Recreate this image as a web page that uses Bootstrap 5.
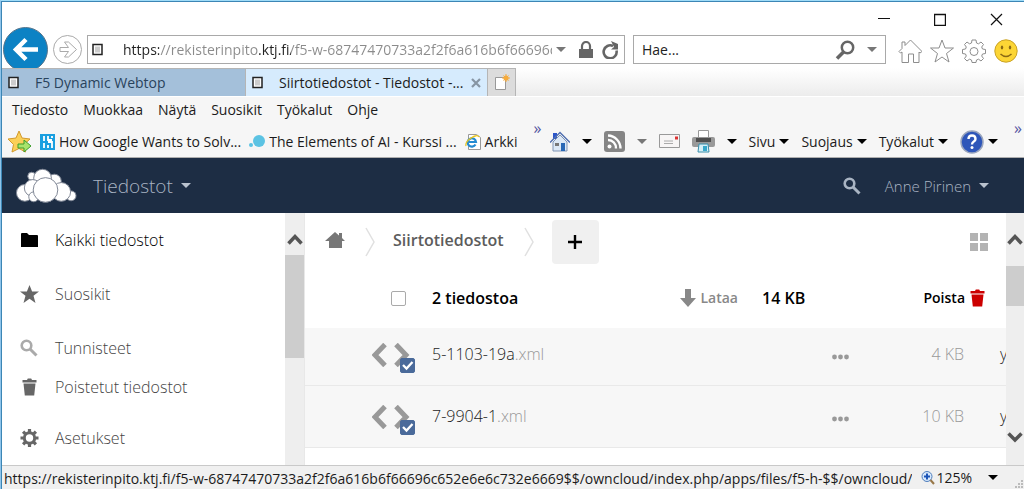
<!DOCTYPE html>
<html lang="fi">
<head>
<meta charset="utf-8">
<meta name="viewport" content="width=device-width, initial-scale=1">
<title>Siirtotiedostot - Tiedostot</title>
<link href="https://cdn.jsdelivr.net/npm/bootstrap@5.3.0/dist/css/bootstrap.min.css" rel="stylesheet">
<style>
body{font:14px/20px "Open Sans","Noto Sans",sans-serif;color:#1b1b1b;background:#fff;border-top:1px solid #9fdcf8;border-left:1px solid #8fc4ea;overflow:hidden}
.window{border-top:1px solid #3c86b5;border-left:1px solid #3c86b5;min-height:0}
svg{display:block;flex:none}
button{border:0;background:none;padding:0;color:inherit;font:inherit;white-space:nowrap}
a{color:inherit;text-decoration:none;white-space:nowrap}
.caption-bar{height:25px;padding-right:8px}
.caption-bar button{width:56px;padding-top:8px;display:flex;justify-content:center}
.caption-bar button:last-child{width:40px;margin-left:8px}
.address-row{height:41px;padding-right:6px}
.box{height:29px;border:1px solid #a9a9a9;background:#fff;display:flex;align-items:center}
.box input{border:0;outline:0;padding:0;font:inherit;min-width:0;flex:1;background:none;color:#222}
.box input::placeholder{color:#222;opacity:1}
.search-box{width:253px}
.address-box input.address{background:linear-gradient(90deg,#222 36px,#8b8b8b 36px 136px,#222 136px 168px,#8b8b8b 168px);-webkit-background-clip:text;background-clip:text;-webkit-text-fill-color:transparent}
.tabs{height:28px;background:linear-gradient(#fff,#ececec)}
.tab-item{display:flex;align-items:center;padding:0 6px;border-top:1px solid #b5b5b5;border-right:1px solid #b5b5b5}
.tab-item.one{width:244px;background:#a4c0da;color:#29435c}
.tab-item.two{width:242px;background:#d6ebfd}
.tab-item.add{width:28px;background:#dcdcdc}
.menus{background:#f6f6f6;border-top:1px solid #fff;height:30px;padding:0 10px 4px;gap:15px}
.commands{background:#f6f6f6;height:32px;border-bottom:1px solid #aeaeae;padding:0 2px 0 6px}
.tools{gap:12px}
.caret{width:0;height:0;border:5px solid transparent;border-top-color:#000;border-bottom:0;flex:none}
.caret.soft{border-top-color:#777}
.chev{color:#5454a0;align-self:flex-start;line-height:4px;font-size:16px;white-space:nowrap}
.cloudbar{background:#1d2d44;height:55px;color:#a9b4c3;padding:0 35px 0 13px;font-weight:300}
.cloudbar .app{font-size:19px}
.cloudbar .user{font-size:15px}
.cloudbar .caret{border-top-color:#b9c2ce}
.work{min-height:0}
.side{width:283px;font-size:16px;font-weight:300;color:#444;padding-top:2px}
.side a{display:flex;align-items:center;padding-left:18px;gap:16px;padding-top:12px;box-sizing:content-box;height:42px}
.side a.near{height:36px;padding-top:0}
.side a.first{padding-top:4px}
.bar{background:#eee;width:19px;display:flex;flex-direction:column;align-items:center;flex:none}
.bar.page{width:18px}
.bar .thumb{background:#cdcdcd;width:100%}
.bar .up{height:42px;padding-top:20px}
.bar.page .up{height:53px}
.main{border-left:1px solid #e8e8e8;min-width:0}
.crumbs{height:57px;padding-left:20px;padding-right:18px;color:#5c5c5c;font-size:16px;font-weight:600}
.crumbs .here{padding-bottom:4px}
.plus{width:47px;height:44px;background:#f0f0f0;border-radius:4px;display:flex;align-items:center;justify-content:center}
.files{table-layout:fixed;width:100%;font-size:16px;font-weight:300;border-collapse:collapse}
.files th,.files td{padding:0;vertical-align:bottom;line-height:20px;height:62px;padding-bottom:21px;overflow:hidden;white-space:nowrap}
.files th{height:58px;padding-bottom:20px;font-weight:600;color:#000}
.files th.pick{padding-right:26px;padding-bottom:22px}
.files tbody tr{background:#f7f7f7;border-bottom:1px solid #e9e9e9}
.files tbody tr:first-child td{height:57px}
.files td.pick{padding:0 0 12px 67px}
.files td.when{padding-left:36px}
.files .ext,.files .size{color:#999}
.pickbox{width:43px;height:30px;position:relative}
.pickbox input{position:absolute;right:0;bottom:0}
input.tick{appearance:none;width:15px;height:15px;margin:0;border:1px solid #aaa;border-radius:2px;background:#fff;display:block}
input.tick:checked{border-color:#4a6a9a;background:#4a6a9a url("data:image/svg+xml,%3Csvg xmlns='http://www.w3.org/2000/svg' viewBox='0 0 13 13'%3E%3Cpath d='M2 6l3.500 3.500L11.500 3' fill='none' stroke='white' stroke-width='2.300'/%3E%3C/svg%3E") center/contain}
.lighter{font-size:14px;font-weight:600}
.lighter.soft{color:#888}
.statusbar{background:#f0f0f0;border-top:1px solid #c9c9c9;height:24px}
.statusbar .link{overflow:hidden;white-space:nowrap;min-width:0;flex:1;padding-left:2px;padding-top:3px}
</style>
</head>
<body class="vh-100 d-flex flex-column">
<svg width="0" height="0" class="position-absolute"><defs>
<symbol id="doc" viewBox="0 0 11 12"><path d="M1 1h9v10H1z" fill="#fff" stroke="#222" stroke-width="1.500"/><path d="M3 3h5v6H3z" fill="#ccc"/></symbol>
<symbol id="bin" viewBox="0 0 16 18"><path d="M1 2h4.500l.8-1.500h3.400L10.500 2H15v2.500H1zM2 5.500h12L12.700 17.500H3.300z"/></symbol>
<symbol id="lens" viewBox="0 0 18 18"><circle cx="6.500" cy="6.500" r="4.800" fill="none" stroke="currentColor" stroke-width="2.600"/><path d="M10 10l6.500 6.500" stroke="currentColor" stroke-width="3"/></symbol>
<symbol id="code" viewBox="0 0 38 24"><path d="M13 1.500L3 12l10 10.500M24 1.500L34 12 24 22.500" fill="none" stroke="#999" stroke-width="5"/></symbol>
<symbol id="dots" viewBox="0 0 17 5"><g fill="#999"><circle cx="2.500" cy="2.500" r="2.400"/><circle cx="8.500" cy="2.500" r="2.400"/><circle cx="14.500" cy="2.500" r="2.400"/></g></symbol>
<symbol id="uparrow" viewBox="0 0 16 12"><path d="M1.500 10.500L8 3.500l6.500 7" fill="none" stroke="#555" stroke-width="3.500"/></symbol>
</defs></svg>

<div class="window flex-fill d-flex flex-column">
  <div class="caption-bar d-flex justify-content-end">
    <button aria-label="Pienennä"><svg width="12" height="14"><path d="M0 8.500h12" stroke="#111"/></svg></button>
    <button aria-label="Suurenna"><svg width="12" height="16"><path d="M.5 4.500h11v11H.5z" fill="none" stroke="#111" stroke-width="1.400"/></svg></button>
    <button aria-label="Sulje"><svg width="13" height="16"><path d="M1 4l11 11M12 4L1 15" stroke="#111" stroke-width="1.200"/></svg></button>
  </div>

  <div class="address-row d-flex">
    <button aria-label="Takaisin"><svg width="47" height="41"><circle cx="23.500" cy="22.500" r="22" fill="#0c82c4" stroke="#57758c"/><path d="M36 22.500H15M24 12.500l-10 10 10 10" fill="none" stroke="#fff" stroke-width="4.500"/></svg></button>
    <button class="ms-1" aria-label="Eteenpäin"><svg width="30" height="41"><circle cx="14.500" cy="22.500" r="14" fill="#fff" stroke="#aaa"/><path d="M7 20.500h8.500l-4-5.500h4l8 7.500-8 7.500h-4l4-5.500H7z" fill="none" stroke="#aaa"/></svg></button>
    <div class="box address-box flex-fill mt-2 ms-1 px-1"><svg class="me-3" width="11" height="13"><use href="#doc"/></svg>
      <input class="address ms-1" aria-label="Osoite" value="https://rekisterinpito.ktj.fi/f5-w-68747470733a2f2f6a616b6f66696c">
      <span class="caret soft ms-1 me-2"></span>
      <svg class="ms-1" width="16" height="18"><path d="M1 8h14v9H1z" fill="#666"/><path d="M4 9V5a4 4 0 0 1 8 0v4" fill="none" stroke="#666" stroke-width="2.200"/></svg>
      <button class="ms-2" aria-label="Päivitä"><svg width="18" height="18"><path d="M14.500 8.500A6.500 6.500 0 1 1 11 4" transform="translate(0 1)" fill="none" stroke="#666" stroke-width="2.600"/><path d="M9 0l7 3v5.500H9l3-2.500z" fill="#666"/></svg></button>
    </div>
    <div class="box search-box mt-2 ms-2 ps-2"><input aria-label="Haku" placeholder="Hae..."><button class="me-2" aria-label="Hae"><svg width="20" height="20"><circle cx="12.500" cy="7.500" r="5.700" fill="none" stroke="#666" stroke-width="2.500"/><path d="M8.500 12L2 18.500" stroke="#666" stroke-width="3.500"/></svg></button><span class="caret soft ms-1 me-2"></span></div>
    <div class="d-flex gap-2 mt-2 ms-2 align-items-start pt-1 ps-1">
      <button aria-label="Koti"><svg width="24" height="24" fill="none" stroke="#8d8d8d"><path d="M1 12.500L4 9.500V3h3v3.500L12.500 1 24 12.500l-2 1.500-1-1v10.500h-5.500V15h-5v8.500H4V13l-1.500 1z"/></svg></button>
      <button aria-label="Suosikit"><svg width="24" height="24" fill="none" stroke="#8d8d8d"><path d="M12 1l3 8h8.500l-7 5.500 2.500 8.500-7-5-7 5 2.500-8.500-7-5.500H9z"/></svg></button>
      <button aria-label="Työkalut"><svg width="24" height="24" fill="none" stroke="#8d8d8d"><path d="M10 1h4l.5 3 2 .8L19 3l2.500 2.500-1.800 2.500.8 2 3 .5v4l-3 .5-.8 2 1.800 2.500L19 22l-2.500-1.800-2 .8-.5 2.500h-4L9.500 21l-2-.8L5 22l-2.500-2.500 1.800-2.500-.8-2-3-.5v-4l3-.5.8-2L2.500 5.500 5 3l2.500 1.800 2-.8z"/><circle cx="12" cy="12.500" r="4"/></svg></button>
      <button aria-label="Palaute"><svg width="24" height="24"><circle cx="12" cy="12" r="11.200" fill="#fcd535" stroke="#c9a227"/><ellipse cx="8" cy="8.500" rx="1.200" ry="2" fill="#8a6914"/><ellipse cx="16" cy="8.500" rx="1.200" ry="2" fill="#8a6914"/><path d="M6.500 15q5.500 5 11 0" fill="none" stroke="#8a6914" stroke-width="1.500"/></svg></button>
    </div>
  </div>

  <div class="tabs d-flex">
    <a href="#" class="tab-item one"><svg class="me-3" width="11" height="13"><use href="#doc"/></svg>F5 Dynamic Webtop</a>
    <div class="tab-item two"><svg width="11" height="13"><use href="#doc"/></svg><a href="#" class="ms-3">Siirtotiedostot - Tiedostot -...</a><button class="ms-auto" aria-label="Sulje välilehti"><svg width="10" height="10"><path d="M1 1l8 8M9 1L1 9" stroke="#8795a3" stroke-width="2.200"/></svg></button></div>
    <button class="tab-item add" aria-label="Uusi välilehti"><svg width="16" height="17"><path d="M1.500 3.500h10v12h-10z" fill="#fff" stroke="#999"/><circle cx="12" cy="4" r="2.600" fill="#f6ab3c"/><path d="M12 0v8M8 4h8M9.500 1.500l5 5M14.500 1.500l-5 5" stroke="#f6ab3c"/></svg></button>
  </div>

  <nav class="menus d-flex align-items-center"><a href="#">Tiedosto</a><a href="#">Muokkaa</a><a href="#">Näytä</a><a href="#">Suosikit</a><a href="#">Työkalut</a><a href="#">Ohje</a></nav>

  <div class="commands d-flex align-items-center">
    <button aria-label="Lisää suosikkeihin"><svg width="24" height="24"><path d="M11 1l3 7 8 1-6 5.500L17.500 22 11 18.500 4 22l1.500-7.500L0 9l8-1z" fill="#fbd058" stroke="#d39a2d"/><path d="M10 14h6v-4l7 6-7 6v-4h-6z" fill="#a9e36b" stroke="#3d9d2b"/></svg></button>
    <a href="#" class="d-flex align-items-center ms-2"><svg class="me-1" width="15" height="16"><path d="M0 0h15v16H0z" fill="#1a9fe0"/><path d="M4 2v5M4 9v5M8 2v4h4M12 2v2M8 8h4v6M8 11v3" stroke="#fff" stroke-width="1.800" fill="none"/></svg>How Google Wants to Solv...</a>
    <a href="#" class="d-flex align-items-center ms-2"><svg class="me-1" width="16" height="16"><circle cx="10" cy="7" r="6" fill="#5cc3e3"/><circle cx="2" cy="11" r="2" fill="#5cc3e3"/></svg>The Elements of AI - Kurssi ...</a>
    <a href="#" class="d-flex align-items-center ms-2"><svg class="me-1" width="16" height="16"><path d="M3.500.5h8l4 3v12h-12z" fill="#fff" stroke="#999"/><path d="M10.500 10.500A4.200 4.200 0 1 1 11 8H4" fill="none" stroke="#238bd2" stroke-width="2.200"/><path d="M1 12Q0 8 6 4t8-1" fill="none" stroke="#e9c51f" stroke-width="1.300"/></svg>Arkki</a>
    <span class="chev ms-3">»</span>
    <div class="tools d-flex align-items-center ms-auto flex-shrink-0">
      <button aria-label="Kotisivu"><svg width="20" height="21"><path d="M3 2h4v6H3z" fill="#2b55c9"/><path d="M3 11l7-7 7 7v9H3z" fill="#dbe8f6" stroke="#8095b5"/><path d="M0 11.500L10 1.500l10 10" fill="none" stroke="#506fb0" stroke-width="1.500"/><path d="M11 12h4v8h-4z" fill="#2867b5"/><path d="M5 12h4v3H5z" fill="#777"/></svg></button><span class="caret"></span>
      <button aria-label="Syötteet"><svg width="21" height="21"><rect width="21" height="21" rx="3" fill="#858585"/><circle cx="5.500" cy="15.500" r="2" fill="#fff"/><path d="M4 9a8 8 0 0 1 8 8.500M4 4.500A13 13 0 0 1 16.500 17.500" fill="none" stroke="#fff" stroke-width="2.400"/></svg></button><span class="caret soft"></span>
      <button aria-label="Lue sähköposti"><svg width="21" height="15"><path d="M.5.500h20v13H.500z" fill="#f7f5f5" stroke="#999"/><path d="M16 2.500h3v3h-3z" fill="#d33"/><path d="M5 7h9M5 9.500h9" stroke="#aaa"/></svg></button>
      <button aria-label="Tulosta"><svg width="23" height="23"><path d="M6.500.5h10v8h-10z" fill="#fff" stroke="#999"/><rect y="7" width="23" height="10" rx="2" fill="#999"/><path d="M4 8h15v4H4z" fill="#4f4f4f"/><path d="M7 14h9l1 8H6z" fill="#d5eff6" stroke="#378eab"/><path d="M11 16h4v5h-4z" fill="#38a8ca"/></svg></button><span class="caret"></span>
      <button class="d-flex align-items-center">Sivu<span class="caret ms-1"></span></button>
      <button class="d-flex align-items-center">Suojaus<span class="caret ms-1"></span></button>
      <button class="d-flex align-items-center">Työkalut<span class="caret ms-1"></span></button>
      <button class="d-flex align-items-center" aria-label="Ohje"><svg width="24" height="24"><circle cx="12" cy="12" r="11" fill="#2e56b9" stroke="#9aa5bd" stroke-width="1.500"/><path d="M8.500 9q0-3.500 3.500-3.500T15.500 9q0 1.500-1.700 2.500T12 14.500" fill="none" stroke="#fff" stroke-width="2.400"/><circle cx="12" cy="17.500" r="1.500" fill="#fff"/></svg><span class="caret ms-1"></span></button>
    </div>
    <span class="chev ms-3">»</span>
  </div>

  <header class="cloudbar d-flex align-items-center">
    <svg width="62" height="36" viewBox="0 0 63 36" fill="#fff" stroke="#7f8795"><circle cx="17" cy="8" r="4"/><circle cx="40" cy="13" r="7"/><circle cx="28" cy="10" r="9"/><circle cx="10" cy="25" r="8.500"/><circle cx="18" cy="20" r="8.500"/><circle cx="19" cy="29" r="5"/><circle cx="57" cy="28" r="5"/><circle cx="47" cy="24" r="9.500"/><circle cx="31" cy="22" r="12.500"/></svg>
    <button class="app d-flex align-items-center ms-3">Tiedostot<span class="caret ms-2"></span></button>
    <button class="ms-auto" aria-label="Etsi"><svg width="18" height="18"><use href="#lens"/></svg></button>
    <button class="user d-flex align-items-center ms-4">Anne Pirinen<span class="caret ms-2"></span></button>
  </header>

  <div class="work d-flex flex-fill overflow-hidden">
    <nav class="side flex-shrink-0">
      <a href="#" class="first text-black"><svg width="19" height="18"><path d="M1 3q0-1 1-1h5l2 2h8q1 0 1 1v11H1z"/></svg>Kaikki tiedostot</a>
      <a href="#"><svg width="19" height="18"><path d="M9.500 0l2.600 6.500H19l-5.500 4.300L15.500 18l-6-4.200-6 4.200 2-7.200L0 6.500h6.900z" fill="#666"/></svg>Suosikit</a>
      <a href="#"><svg width="19" height="18" color="#aaa"><use href="#lens" width="18"/></svg>Tunnisteet</a>
      <a href="#" class="near"><svg width="19" height="18" fill="#666"><use href="#bin"/></svg>Poistetut tiedostot</a>
      <a href="#"><svg width="19" height="18"><circle cx="9.500" cy="9" r="5.200" fill="none" stroke="#666" stroke-width="3"/><path d="M9.500 0v3M9.500 15v3M.5 9h3M15.500 9h3M3.100 2.600l2.200 2.200M13.700 13.200l2.200 2.200M15.900 2.600l-2.200 2.200M5.300 13.200l-2.200 2.200" stroke="#666" stroke-width="3.200"/></svg>Asetukset</a>
    </nav>
    <div class="bar"><div class="up"><svg width="16" height="12"><use href="#uparrow"/></svg></div><div class="thumb" style="height:41%"></div></div>
    <main class="main flex-fill">
      <div class="crumbs d-flex align-items-center">
        <a href="#" class="here" aria-label="Koti"><svg width="20" height="18"><path d="M0 10l10-9 4 3.500V2h3v5l3 3h-3v7H4v-7z" fill="#777"/></svg></a>
        <svg class="ms-3 ps-1" width="16" height="30"><path d="M1 1l8 14-8 14" fill="none" stroke="#e0e0e0" stroke-width="1.500"/></svg>
        <a href="#" class="here ms-3">Siirtotiedostot</a>
        <svg class="ms-3 ps-1" width="16" height="30"><path d="M1 1l8 14-8 14" fill="none" stroke="#e0e0e0" stroke-width="1.500"/></svg>
        <button class="plus ms-3" aria-label="Uusi"><svg width="16" height="16"><path d="M8 1v14M1 8h14" stroke="#000" stroke-width="2.400"/></svg></button>
        <button class="ms-auto" aria-label="Ruudukko"><svg width="18" height="18" fill="#b3b3b3"><path d="M0 0h8v8H0zM10 0h8v8h-8zM0 10h8v8H0zM10 10h8v8h-8z"/></svg></button>
      </div>
      <table class="files">
        <colgroup><col style="width:127px"><col><col style="width:80px"><col style="width:45px"><col style="width:101px"><col style="width:42px"></colgroup>
        <thead><tr>
          <th class="pick"><input type="checkbox" class="tick ms-auto" aria-label="Valitse kaikki"></th>
          <th><div class="d-flex align-items-center justify-content-between">2 tiedostoa<button class="lighter soft d-flex align-items-center"><svg class="me-1" width="16" height="18"><path d="M5 0h6v9h5l-8 9-8-9h5z" fill="#888"/></svg>Lataa</button></div></th>
          <th class="ps-4">14 KB</th><th></th>
          <th colspan="2"><button class="lighter d-flex align-items-center ms-auto me-3 pe-1">Poista<svg class="ms-1" width="17" height="18" fill="#c00"><use href="#bin"/></svg></button></th>
        </tr></thead>
        <tbody>
          <tr><td class="pick"><div class="pickbox"><svg width="38" height="24"><use href="#code"/></svg><input type="checkbox" class="tick" checked aria-label="Valitse 5-1103-19a.xml"></div></td><td><a href="#">5-1103-19a<span class="ext">.xml</span></a></td><td></td><td><button class="d-flex mx-auto" aria-label="Toiminnot"><svg width="17" height="14"><use href="#dots"/></svg></button></td><td class="size text-end">4 KB</td><td class="when">y</td></tr>
          <tr><td class="pick"><div class="pickbox"><svg width="38" height="24"><use href="#code"/></svg><input type="checkbox" class="tick" checked aria-label="Valitse 7-9904-1.xml"></div></td><td><a href="#">7-9904-1<span class="ext">.xml</span></a></td><td></td><td><button class="d-flex mx-auto" aria-label="Toiminnot"><svg width="17" height="14"><use href="#dots"/></svg></button></td><td class="size text-end">10 KB</td><td class="when">y</td></tr>
        </tbody>
      </table>
    </main>
    <div class="bar page"><div class="up"><svg width="16" height="12"><use href="#uparrow"/></svg></div><div class="thumb" style="height:16%"></div><svg class="mt-auto mb-3" width="16" height="18"><path d="M1.500 2.500L8 9l6.500-6.500" fill="none" stroke="#555" stroke-width="3.500"/></svg></div>
  </div>

  <footer class="statusbar d-flex align-items-center">
    <div class="link">https://rekisterinpito.ktj.fi/f5-w-68747470733a2f2f6a616b6f66696c652e6e6c732e6669$$/owncloud/index.php/apps/files/f5-h-$$/owncloud/in</div>
    <button class="d-flex align-items-center ms-2" aria-label="Zoomaus 125%"><svg width="16" height="14"><circle cx="7" cy="5.500" r="5" fill="#d7e8fb" stroke="#507fbd"/><path d="M7 2.500v6M4 5.500h6" stroke="#1c55b8" stroke-width="2"/><path d="M10.500 9l3.500 4" stroke="#977748" stroke-width="2"/></svg>125%<span class="caret ms-3"></span></button>
    <svg class="ms-3 align-self-end" width="10" height="10" fill="#bbb"><path d="M7 1h2v2H7zM4 4h2v2H4zM7 4h2v2H7zM1 7h2v2H1zM4 7h2v2H4zM7 7h2v2H7z"/></svg>
  </footer>
</div>
<script src="https://cdn.jsdelivr.net/npm/bootstrap@5.3.0/dist/js/bootstrap.bundle.min.js"></script>
</body>
</html>
